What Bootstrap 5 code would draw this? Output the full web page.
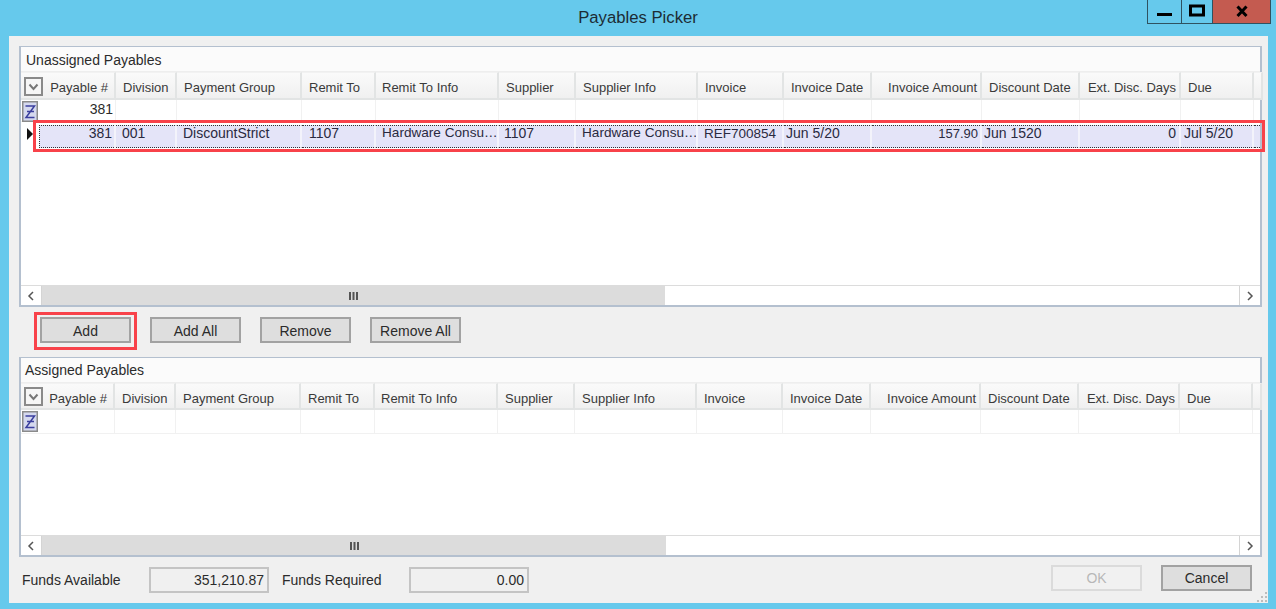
<!DOCTYPE html>
<html lang="en">
<head>
<meta charset="utf-8">
<title>Payables Picker</title>
<link rel="stylesheet" href="https://cdn.jsdelivr.net/npm/bootstrap@5.3.0/dist/css/bootstrap.min.css">
<style>
html,body{height:609px;overflow:hidden}
body{background:#66c9ec;font-family:"Liberation Sans",Arial,sans-serif;font-size:14px;color:#2b2b2b;line-height:1}
.wnd{height:609px;position:relative}
.titlebar{height:36px;position:relative;font-size:16.7px;color:#1c2c34;padding-top:10px}
.capbtns{position:absolute;right:5px;top:0;height:24px;border:1px solid #2f5260;border-top:0}
.capbtn{width:34px;border-right:1px solid #2f5260}
.capbtn.mid{width:31px}
.capbtn.closer{width:57px;border-right:0;background:#c45b50}
.client{height:567px;margin:0 8px 0 9px;background:#f0f0f0;padding:10px 6px 0 10px}
.pane{border:2px solid #b4c0cf;border-top-width:1px;border-right-width:2px;background:#fff;width:1243px}
.pane-a{height:261px}
.pane-b{height:200px}
.cap{height:25px;background:#fbfbfb;padding:6px 0 0 5px;border-bottom:1px solid #eee;flex:none}
.pane-b .cap{padding:5px 0 0 4px}
.gridrow{display:grid;grid-template-columns:95px 61px 125px 74px 123px 77px 122px 86px 88px 110px 98px 101px 73px 6px}
.pane-b .gridrow{grid-template-columns:94px 61px 125px 74px 123px 77px 122px 86px 88px 110px 98px 101px 73px 6px}
.headrow{height:28px;font-size:13px;flex:none}
.pane-b .headrow{height:27px}
.hcell{background:linear-gradient(#fafafa,#f0f0f0);border-right:2px solid #e2e4e4;border-bottom:2px solid #e2e4e4;border-top:1px solid #f2f2f2;padding:8px 0 0 7px;white-space:nowrap;overflow:hidden;color:#3a3a3a;position:relative}
.hcell.first{padding:8px 6px 0 0;text-align:right}
.hcell.tight{padding-left:6px}
.hend{text-align:right;padding:8px 3px 0 0}
.bodyarea{flex:1 1 auto;background:#fff;overflow:hidden}
.datarow{height:22px;font-size:14px}
.sumrow .dcell{border-right:1px solid #f1f1f1;border-bottom:1px solid #f1f1f1;padding:2px 2px 0 7px;text-align:left}
.pane-b .sumrow{height:24px}
.selrow{height:27px;background:#fff}
.selrow .dcell{background:#e4e4f8;border-right:2px solid #f3f3fb;padding:0 0 0 6px;white-space:nowrap;overflow:hidden;border-top:1px dotted #333;border-bottom:1px dotted #333;color:#2a2a40;margin-top:3px;height:23px}
.dcell.pl2{padding-left:2px !important}
.dcell.pl3{padding-left:3px !important}
.dcell.pl5{padding-left:5px !important}
.dcell.pl7{padding-left:7px !important}
.dcell.numtxt{font-size:13px;padding-top:1px !important;padding-right:2px !important}
.dcell.reftxt{font-size:13.500px;padding-top:1px !important}
.dcell.elltxt{font-size:13.600px}
.dcell.right{text-align:right;padding-right:3px;padding-left:0}
.dcell.first{position:relative;text-align:right;padding-right:2px}
.selrow .dcell.first{background:linear-gradient(90deg,#fff 18px,#e4e4f8 18px);border-top:0;border-bottom:0;padding-top:1px;overflow:visible}
.selrow .dcell.first::before{content:"";position:absolute;left:18px;right:0;top:0;bottom:0;border:1px dotted #333;border-right:0}
.sigma{position:absolute;left:1px;top:1px;width:16px;height:21px}
.chk{position:absolute;left:3px;top:4px;width:19px;height:19px;border:2px solid #8a8a8a;background:#f6f6f6}
.pane-b .chk{top:3px}
.rowmark{position:absolute;left:6px;top:3px;width:0;height:0;border-left:6px solid #111;border-top:6px solid transparent;border-bottom:6px solid transparent}
.hscroll{height:20px;flex:none;background:#fff;border-top:1px solid #dcdcdc}
.sbtn{width:21px;height:100%;border-right:1px solid #d4d4d4;flex:none}
.sbtn.rgt{border-right:0;border-left:1px solid #d4d4d4}
.sthumb{width:623px;background:#dcdcdc;flex:none;color:#555}
.pane-b .sthumb{width:624px}
.strack{flex:1 1 auto}
.btnrow{height:50px;padding:10px 0 0 21px;gap:19px}
.wbtn{width:91px;height:26px;border:2px solid #a2a2a2;background:#dedede;color:#2b2b2b;font-size:14px;padding:0;border-radius:0;line-height:1}
.btnrow .wbtn{padding-top:2px}
.wbtn.off{background:#f3f3f3;border-color:#d0d0d0;color:#9a9a9a}
.foot{padding:10px 10px 0 3px;position:relative}
.lbl{width:127px;flex:none;padding-top:6px}
.valbox{width:120px;height:26px;border:2px solid #c4c4c4;background:#f0f0f0;text-align:right;padding:4px 3px 0 0;flex:none;margin-right:13px;font-size:14px}
.okgrp{gap:19px;margin-top:-2px}
.redbox{position:absolute;border:3px solid #f8424a;pointer-events:none}
.red-row{left:33px;top:120px;width:1232px;height:32px}
.red-add{left:34px;top:312px;width:103px;height:38px}
.grip{position:absolute;right:8px;bottom:6px;width:12px;height:12px}
</style>
</head>
<body>
<div class="wnd">
  <div class="titlebar text-center">Payables Picker
    <div class="capbtns d-flex">
      <div class="capbtn d-flex align-items-center justify-content-center"><svg width="16" height="16" viewBox="0 0 16 16"><rect x="0" y="9" width="15" height="3" fill="#000"/></svg></div>
      <div class="capbtn mid d-flex align-items-center justify-content-center"><svg width="18" height="16" viewBox="0 0 18 16"><rect x="2.500" y="2" width="13" height="9" fill="none" stroke="#000" stroke-width="3"/></svg></div>
      <div class="capbtn closer d-flex align-items-center justify-content-center"><svg width="16" height="14" viewBox="0 0 16 14"><path d="M3.500 1.500 12.500 11M12.500 1.500 3.500 11" stroke="#000" stroke-width="3" fill="none"/></svg></div>
    </div>
  </div>
  <div class="client">
    <section class="pane pane-a d-flex flex-column">
      <div class="cap">Unassigned Payables</div>
      <div class="gridrow headrow">
        <div class="hcell first"><span class="chk"><svg width="15" height="15" viewBox="0 0 15 15" class="d-block"><path d="M3.500 5.500 7.500 10 11.500 5.500" fill="none" stroke="#777" stroke-width="2"/></svg></span>Payable #</div>
        <div class="hcell">Division</div><div class="hcell">Payment Group</div><div class="hcell">Remit To</div><div class="hcell tight">Remit To Info</div><div class="hcell">Supplier</div><div class="hcell">Supplier Info</div><div class="hcell">Invoice</div><div class="hcell">Invoice Date</div><div class="hcell hend">Invoice Amount</div><div class="hcell">Discount Date</div><div class="hcell hend">Ext. Disc. Days</div><div class="hcell">Due</div><div class="hcell"></div>
      </div>
      <div class="bodyarea">
        <div class="gridrow datarow sumrow">
          <div class="dcell first"><svg class="sigma" viewBox="0 0 16 21"><rect x=".75" y=".75" width="14.500" height="19.500" fill="#d5d9ee" stroke="#8a8a8a" stroke-width="1.500"/><path d="M3.500 5H12.500L4 16.500H12.500M5 10.500H12" fill="none" stroke="#3b3f9e" stroke-width="1.500"/></svg>381</div>
          <div class="dcell"></div><div class="dcell"></div><div class="dcell"></div><div class="dcell"></div><div class="dcell"></div><div class="dcell"></div><div class="dcell"></div><div class="dcell"></div><div class="dcell"></div><div class="dcell"></div><div class="dcell"></div><div class="dcell"></div><div class="dcell"></div>
        </div>
        <div class="gridrow datarow selrow">
          <div class="dcell first"><span class="rowmark"></span>381</div>
          <div class="dcell">001</div><div class="dcell">DiscountStrict</div><div class="dcell pl7">1107</div><div class="dcell elltxt">Hardware Consu…</div><div class="dcell pl5">1107</div><div class="dcell elltxt">Hardware Consu…</div><div class="dcell reftxt">REF700854</div><div class="dcell pl2">Jun 5/20</div><div class="dcell right numtxt">157.90</div><div class="dcell pl2">Jun 1520</div><div class="dcell right">0</div><div class="dcell pl3">Jul 5/20</div><div class="dcell"></div>
        </div>
      </div>
      <div class="hscroll d-flex">
        <div class="sbtn d-flex align-items-center justify-content-center"><svg width="8" height="10" viewBox="0 0 8 10"><path d="M6 1 2 5 6 9" fill="none" stroke="#555" stroke-width="1.500"/></svg></div>
        <div class="sthumb d-flex align-items-center justify-content-center"><svg width="9" height="8" viewBox="0 0 9 8"><path d="M1 0V8M4.500 0V8M8 0V8" stroke="#555" stroke-width="2"/></svg></div>
        <div class="strack"></div>
        <div class="sbtn rgt d-flex align-items-center justify-content-center"><svg width="8" height="10" viewBox="0 0 8 10"><path d="M2 1 6 5 2 9" fill="none" stroke="#555" stroke-width="1.500"/></svg></div>
      </div>
    </section>

    <div class="btnrow d-flex">
      <button type="button" class="btn wbtn">Add</button>
      <button type="button" class="btn wbtn">Add All</button>
      <button type="button" class="btn wbtn">Remove</button>
      <button type="button" class="btn wbtn">Remove All</button>
    </div>

    <section class="pane pane-b d-flex flex-column">
      <div class="cap">Assigned Payables</div>
      <div class="gridrow headrow">
        <div class="hcell first"><span class="chk"><svg width="15" height="15" viewBox="0 0 15 15" class="d-block"><path d="M3.500 5.500 7.500 10 11.500 5.500" fill="none" stroke="#777" stroke-width="2"/></svg></span>Payable #</div>
        <div class="hcell">Division</div><div class="hcell">Payment Group</div><div class="hcell">Remit To</div><div class="hcell tight">Remit To Info</div><div class="hcell">Supplier</div><div class="hcell">Supplier Info</div><div class="hcell">Invoice</div><div class="hcell">Invoice Date</div><div class="hcell hend">Invoice Amount</div><div class="hcell">Discount Date</div><div class="hcell hend">Ext. Disc. Days</div><div class="hcell">Due</div><div class="hcell"></div>
      </div>
      <div class="bodyarea">
        <div class="gridrow datarow sumrow">
          <div class="dcell first"><svg class="sigma" viewBox="0 0 16 21"><rect x=".75" y=".75" width="14.500" height="19.500" fill="#d5d9ee" stroke="#8a8a8a" stroke-width="1.500"/><path d="M3.500 5H12.500L4 16.500H12.500M5 10.500H12" fill="none" stroke="#3b3f9e" stroke-width="1.500"/></svg></div>
          <div class="dcell"></div><div class="dcell"></div><div class="dcell"></div><div class="dcell"></div><div class="dcell"></div><div class="dcell"></div><div class="dcell"></div><div class="dcell"></div><div class="dcell"></div><div class="dcell"></div><div class="dcell"></div><div class="dcell"></div><div class="dcell"></div>
        </div>
      </div>
      <div class="hscroll d-flex">
        <div class="sbtn d-flex align-items-center justify-content-center"><svg width="8" height="10" viewBox="0 0 8 10"><path d="M6 1 2 5 6 9" fill="none" stroke="#555" stroke-width="1.500"/></svg></div>
        <div class="sthumb d-flex align-items-center justify-content-center"><svg width="9" height="8" viewBox="0 0 9 8"><path d="M1 0V8M4.500 0V8M8 0V8" stroke="#555" stroke-width="2"/></svg></div>
        <div class="strack"></div>
        <div class="sbtn rgt d-flex align-items-center justify-content-center"><svg width="8" height="10" viewBox="0 0 8 10"><path d="M2 1 6 5 2 9" fill="none" stroke="#555" stroke-width="1.500"/></svg></div>
      </div>
    </section>

    <div class="foot d-flex align-items-start">
      <div class="lbl">Funds Available</div>
      <div class="valbox">351,210.87</div>
      <div class="lbl">Funds Required</div>
      <div class="valbox">0.00</div>
      <div class="okgrp ms-auto d-flex">
        <button type="button" class="btn wbtn off" disabled>OK</button>
        <button type="button" class="btn wbtn">Cancel</button>
      </div>
    </div>
  </div>
  <div class="redbox red-row"></div>
  <div class="redbox red-add"></div>
  <svg class="grip" viewBox="0 0 12 12"><g fill="#bdbdbd"><rect x="9" y="1" width="2" height="2"/><rect x="5" y="5" width="2" height="2"/><rect x="9" y="5" width="2" height="2"/><rect x="1" y="9" width="2" height="2"/><rect x="5" y="9" width="2" height="2"/><rect x="9" y="9" width="2" height="2"/></g></svg>
</div>
<script src="https://cdn.jsdelivr.net/npm/bootstrap@5.3.0/dist/js/bootstrap.bundle.min.js"></script>
</body>
</html>
